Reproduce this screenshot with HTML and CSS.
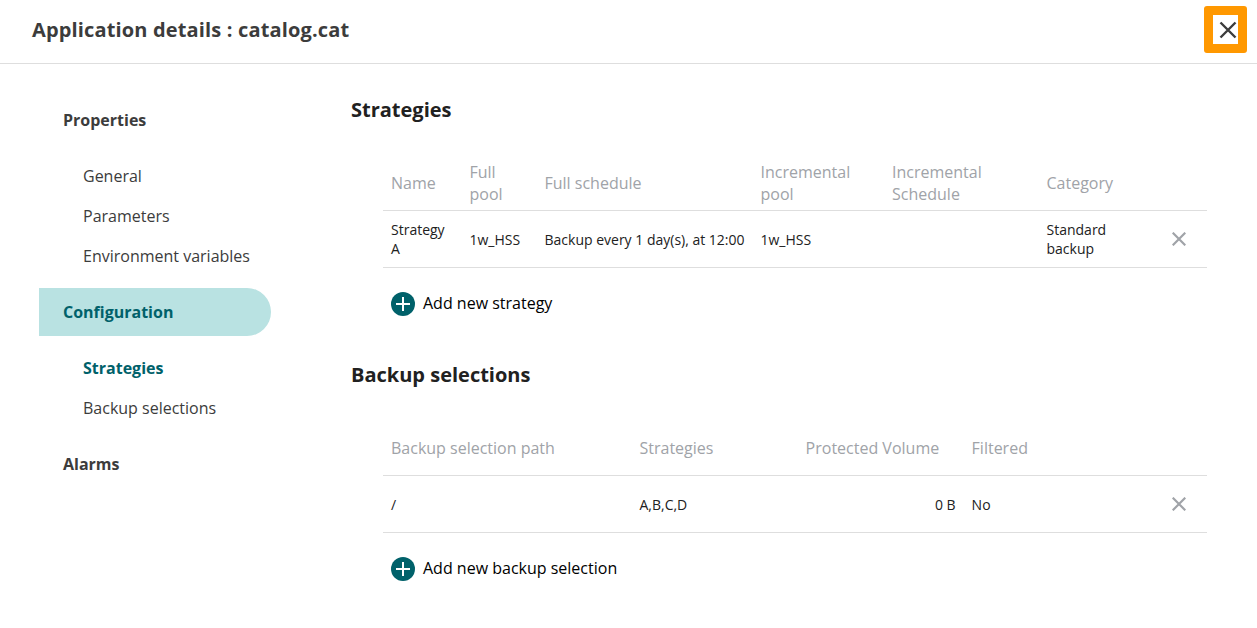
FILE: index.html
```html
<!DOCTYPE html>
<html lang="en">
<head>
<meta charset="utf-8">
<title>Application details</title>
<link rel="stylesheet" href="styles.css">
</head>
<body>
<header class="header">
  <h1 class="title">Application details : catalog.cat</h1>
  <button class="close" aria-label="Close"><svg width="18" height="18" viewBox="0 0 18 18"><path d="M1.5 1.5 16.5 16.5M16.5 1.5 1.5 16.5"/></svg></button>
</header>
<div class="layout">
  <nav class="nav">
    <a class="group">Properties</a>
    <div class="items"><a>General</a><a>Parameters</a><a>Environment variables</a></div>
    <a class="group selected">Configuration</a>
    <div class="items"><a class="current">Strategies</a><a>Backup selections</a></div>
    <a class="group">Alarms</a>
  </nav>
  <main class="main">
    <section class="section">
      <h2>Strategies</h2>
      <table class="table strategies">
        <colgroup><col class="s1"><col class="s2"><col class="s3"><col class="s4"><col class="s5"><col class="s6"><col></colgroup>
        <thead><tr><th>Name</th><th>Full<br>pool</th><th>Full schedule</th><th>Incremental<br>pool</th><th>Incremental<br>Schedule</th><th>Category</th><th></th></tr></thead>
        <tbody><tr><td>Strategy<br>A</td><td>1w_HSS</td><td>Backup every 1 day(s), at 12:00</td><td>1w_HSS</td><td></td><td>Standard<br>backup</td><td><svg class="remove" width="14" height="14" viewBox="0 0 14 14"><path d="M.7.7 13.3 13.3M13.3.7.7 13.3"/></svg></td></tr></tbody>
      </table>
      <button class="add"><svg width="24" height="24" viewBox="0 0 24 24"><circle cx="12" cy="12" r="12"/><path d="M12 5v14M5 12h14"/></svg><span>Add new strategy</span></button>
    </section>
    <section class="section">
      <h2>Backup selections</h2>
      <table class="table selections">
        <colgroup><col class="b1"><col class="b2"><col class="b3"><col class="b4"><col></colgroup>
        <thead><tr><th>Backup selection path</th><th>Strategies</th><th>Protected Volume</th><th>Filtered</th><th></th></tr></thead>
        <tbody><tr><td>/</td><td>A,B,C,D</td><td class="num">0 B</td><td>No</td><td><svg class="remove" width="14" height="14" viewBox="0 0 14 14"><path d="M.7.7 13.3 13.3M13.3.7.7 13.3"/></svg></td></tr></tbody>
      </table>
      <button class="add"><svg width="24" height="24" viewBox="0 0 24 24"><circle cx="12" cy="12" r="12"/><path d="M12 5v14M5 12h14"/></svg><span>Add new backup selection</span></button>
    </section>
  </main>
</div>
</body>
</html>
```
FILE: styles.css
```css
* { box-sizing: border-box; }
body { margin: 0; height: 628px; overflow: hidden; background: #fff; color: #3c3c3c; font: 16px/24px "Open Sans", "Noto Sans", sans-serif; }
button { border: 0; background: none; padding: 0; font: inherit; }
.header { height: 64px; border-bottom: 1px solid #dedede; display: flex; justify-content: space-between; align-items: flex-start; padding: 6px 10px 0 32px; }
.title { margin: 9px 0 0; font-size: 20px; line-height: 30px; font-weight: 700; letter-spacing: 0.15px; }
.close { width: 43px; height: 47px; border: 9px solid #ff9800; border-radius: 3px; display: flex; align-items: center; justify-content: center; padding-left: 4px; padding-top: 1px; }
.close svg { flex: none; fill: none; stroke: #3c3c3c; stroke-width: 2.4; }
.layout { display: flex; }
.nav { width: 232px; margin: 32px 0 0 39px; flex: none; }
.nav a { display: block; }
.group { height: 48px; padding: 12px 24px; font-weight: 700; }
.selected { background: #b9e2e2; color: #00616a; border-radius: 0 24px 24px 0; }
.items { padding: 12px 0 12px 44px; }
.items a { height: 40px; padding: 8px 0; }
.items .current { color: #00616a; font-weight: 700; }
.main { margin: 31px 0 0 80px; width: 856px; }
.section { height: 265px; }
h2 { margin: 0; font-size: 20px; line-height: 30px; font-weight: 700; color: #212121; }
.table { width: 824px; margin: 28px 0 23px 32px; border-collapse: collapse; table-layout: fixed; white-space: nowrap; }
.table tr { border-bottom: 1px solid #dedede; }
.table th { height: 57px; padding: 4px 8px 0; text-align: left; font-weight: 400; line-height: 22px; color: #a0a3a8; }
.table td { height: 57px; padding: 1px 8px 0; font-size: 14px; line-height: 19px; color: #212121; }
.table .num { text-align: right; }
.strategies tr > :nth-child(2), .strategies tr > :nth-child(6), .selections tr > :nth-child(2) { padding-left: 8.5px; }
.strategies tr > :nth-child(3), .strategies tr > :nth-child(4) { padding-left: 7.5px; }
.selections tr > :nth-child(3), .selections tr > :nth-child(4) { padding-left: 8.6px; padding-right: 7.4px; }
.s1 { width: 78px; } .s2 { width: 76px; } .s3 { width: 216px; } .s4 { width: 131px; } .s5 { width: 154px; } .s6 { width: 125px; }
.b1 { width: 248px; } .b2 { width: 166px; } .b3 { width: 166px; } .b4 { width: 200px; }
.remove { display: block; margin-left: 1px; fill: none; stroke: #a0a3a8; stroke-width: 2.2; }
.add { display: flex; align-items: center; gap: 8px; margin-left: 40px; color: #000; }
.add span { padding-bottom: 2px; }
.add circle { fill: #00616a; }
.add path { stroke: #fff; stroke-width: 2; }
```
